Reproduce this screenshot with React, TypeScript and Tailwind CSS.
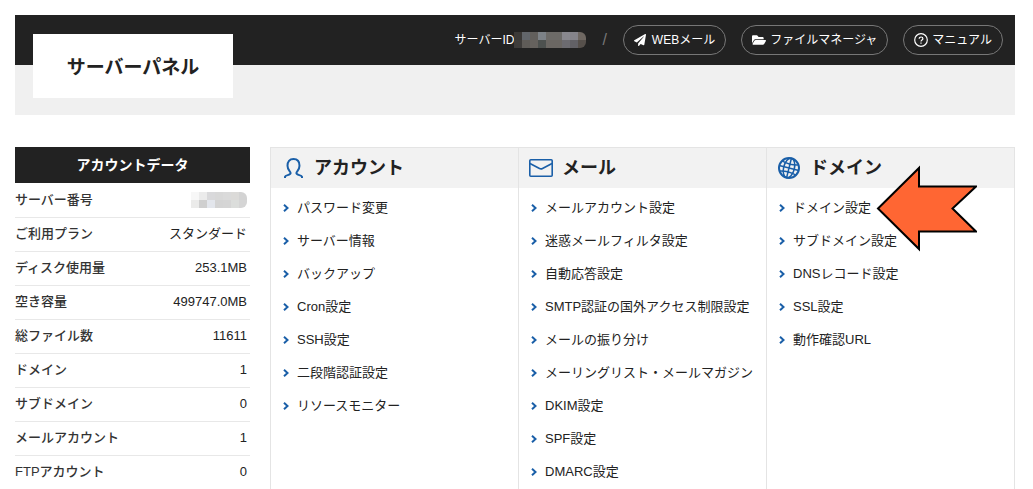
import { FaFolderOpen, FaPaperPlane } from "react-icons/fa";

const accountData = [
  { label: "サーバー番号", value: null },
  { label: "ご利用プラン", value: "スタンダード" },
  { label: "ディスク使用量", value: "253.1MB" },
  { label: "空き容量", value: "499747.0MB" },
  { label: "総ファイル数", value: "11611" },
  { label: "ドメイン", value: "1" },
  { label: "サブドメイン", value: "0" },
  { label: "メールアカウント", value: "1" },
  { label: "FTPアカウント", value: "0" },
];

const sections = [
  {
    title: "アカウント",
    icon: <UserIcon />,
    links: [
      "パスワード変更",
      "サーバー情報",
      "バックアップ",
      "Cron設定",
      "SSH設定",
      "二段階認証設定",
      "リソースモニター",
    ],
  },
  {
    title: "メール",
    icon: <MailIcon />,
    links: [
      "メールアカウント設定",
      "迷惑メールフィルタ設定",
      "自動応答設定",
      "SMTP認証の国外アクセス制限設定",
      "メールの振り分け",
      "メーリングリスト・メールマガジン",
      "DKIM設定",
      "SPF設定",
      "DMARC設定",
    ],
  },
  {
    title: "ドメイン",
    icon: <GlobeIcon />,
    links: ["ドメイン設定", "サブドメイン設定", "DNSレコード設定", "SSL設定", "動作確認URL"],
    highlighted: "ドメイン設定",
  },
];

function UserIcon() {
  return (
    <svg width="24" height="24" viewBox="0 0 24 24" fill="none" stroke="#1a5fa8" strokeWidth="2" aria-hidden>
      <path d="M4 22v-1.200c.4-2.200 5.600-1.200 5.600-3.800 0-1.700-3.100-3-3.100-7.300C6.500 5.700 8.500 3 12.500 3s6 2.700 6 6.700c0 4.300-3.100 5.600-3.100 7.300 0 2.600 5.200 1.600 5.600 3.800V22" />
    </svg>
  );
}

function MailIcon() {
  return (
    <svg width="24" height="24" viewBox="0 0 24 24" fill="none" stroke="#1a5fa8" strokeWidth="1.600" aria-hidden>
      <rect x=".8" y="3.800" width="22.400" height="16.400" rx="1" />
      <path d="M1 7.500l9.500 5q1.500 .8 3 0L23 7.500" />
    </svg>
  );
}

function GlobeIcon() {
  return (
    <svg width="24" height="24" viewBox="0 0 24 24" fill="none" stroke="#1a5fa8" aria-hidden>
      <circle cx="12" cy="12" r="10" strokeWidth="2" />
      <g strokeWidth="1.500" transform="rotate(14 12 12)">
        <ellipse cx="12" cy="12" rx="5.400" ry="10" />
        <path d="M12 2v20M2 12h20M3.500 6.800q8.500 2.500 17 0M3.500 17.200q8.500-2.500 17 0" />
      </g>
    </svg>
  );
}

function Chevron() {
  return (
    <svg width="6" height="8" viewBox="0 0 6 8" fill="none" stroke="#1a5fa8" strokeWidth="2" className="shrink-0" aria-hidden>
      <path d="M1 .8L4.500 4 1 7.200" />
    </svg>
  );
}

function HelpIcon() {
  return (
    <svg width="14" height="14" viewBox="0 0 14 14" fill="none" stroke="currentColor" strokeWidth="1.200" aria-hidden>
      <circle cx="7" cy="7" r="6.300" />
      <path d="M5.200 5.700c0-2.300 3.700-2.200 3.700 0 0 1.300-1.900 1.300-1.900 2.700M7 9.500v1.200" />
    </svg>
  );
}

// Pixelated block drawn over a private value
function Mosaic({ colors, columns, label }: { colors: string[]; columns: number; label: string }) {
  return (
    <svg
      width={columns * 8}
      height="16"
      viewBox={`0 0 ${columns * 8} 16`}
      shapeRendering="crispEdges"
      className="rounded-r-md"
      role="img"
      aria-label={label}
    >
      {colors.map((color, i) => (
        <rect key={i} x={(i % columns) * 8} y={Math.floor(i / columns) * 8} width="8" height="8" fill={color} />
      ))}
    </svg>
  );
}

const pill =
  "flex h-[30px] items-center rounded-full border border-[#777] px-[10px] text-white hover:bg-white/10";

function Header() {
  return (
    <header className="bg-[#f0f0f0] pb-[50px]">
      <div className="flex h-[50px] items-start justify-between bg-[#222] pr-3 pl-[18px]">
        <h1 className="mt-[19px] flex h-16 w-[200px] items-center justify-center bg-white font-['Noto_Sans_CJK_JP',sans-serif] text-[19px] font-bold text-[#222]">
          サーバーパネル
        </h1>
        <div className="flex h-full items-center text-xs text-white">
          <span>サーバーID</span>
          <Mosaic
            label="ID"
            columns={9}
            colors={[
              "#3b3937", "#62666b", "#625f5c", "#7d8287", "#6d6b68", "#6d6b68", "#89888e", "#85848a", "#6f6862",
              "#3f3d3b", "#5f5c58", "#66625e", "#4d514f", "#6b6763", "#6b6763", "#6c6b70", "#626166", "#56504b",
            ]}
          />
          <span className="mx-4 text-base text-[#777]">/</span>
          <nav className="flex gap-[15px]">
            <a href="#webmail" className={`${pill} gap-[6px]`}>
              <FaPaperPlane size={12} />
              WEBメール
            </a>
            <a href="#files" className={`${pill} gap-1`}>
              <FaFolderOpen size={14} />
              ファイルマネージャ
            </a>
            <a href="#manual" className={`${pill} gap-1`}>
              <HelpIcon />
              マニュアル
            </a>
          </nav>
        </div>
      </div>
    </header>
  );
}

function AccountTable() {
  return (
    <table className="w-[235px] shrink-0 self-start text-[13px]">
      <caption className="h-9 bg-[#222] text-sm leading-9 font-bold text-white">アカウントデータ</caption>
      <tbody>
        {accountData.map(({ label, value }) => (
          <tr key={label} className="h-[34px] border-b border-[#e8e8e8]">
            <th scope="row" className="text-left font-medium text-[#333]">
              {label}
            </th>
            <td className="pr-[3px] text-right">
              {value ?? (
                <span className="flex justify-end">
                  <Mosaic
                    label="番号"
                    columns={7}
                    colors={[
                      "#f7f7f7", "#ebebeb", "#d9d9db", "#d8d8d8", "#dadada", "#dbdad8", "#d3d3d3",
                      "#ebebea", "#cfcfcf", "#e3e6ec", "#d4d4d4", "#d5d5d5", "#dbdddb", "#d5d5d5",
                    ]}
                  />
                </span>
              )}
            </td>
          </tr>
        ))}
      </tbody>
    </table>
  );
}

function Arrow() {
  return (
    <svg
      width="102"
      height="88"
      viewBox="0 0 102 88"
      className="pointer-events-none absolute top-1/2 left-full ml-1 -translate-y-1/2"
      aria-hidden
    >
      <path
        d="M3 44.500L44 4v18.500h57L77.500 44.500l23.500 23H44V85z"
        fill="#ff6633"
        stroke="#000"
        strokeWidth="2"
      />
    </svg>
  );
}

export default function App() {
  return (
    <div className="min-h-screen bg-white pt-[15px] pr-[18px] pl-[15px] font-['Liberation_Sans','Noto_Sans_CJK_JP',sans-serif] text-[#222]">
      <Header />
      <main className="mt-8 flex gap-5">
        <AccountTable />
        <div className="grid flex-1 grid-cols-3 border-t border-r border-[#e4e4e4]">
          {sections.map(({ title, icon, links, highlighted }) => (
            <section key={title} className="border-l border-[#e4e4e4]">
              <h2 className="flex h-10 items-center gap-[9px] bg-[#f2f2f2] px-[10px] text-lg font-bold">
                {icon}
                {title}
              </h2>
              <ul className="flex flex-col gap-[13px] py-[10px] pl-3 text-[13px] leading-5">
                {links.map((link) => (
                  <li key={link} className="flex">
                    <a href="#" className="relative flex items-center gap-2 whitespace-nowrap hover:underline">
                      <Chevron />
                      {link}
                      {link === highlighted && <Arrow />}
                    </a>
                  </li>
                ))}
              </ul>
            </section>
          ))}
        </div>
      </main>
    </div>
  );
}
